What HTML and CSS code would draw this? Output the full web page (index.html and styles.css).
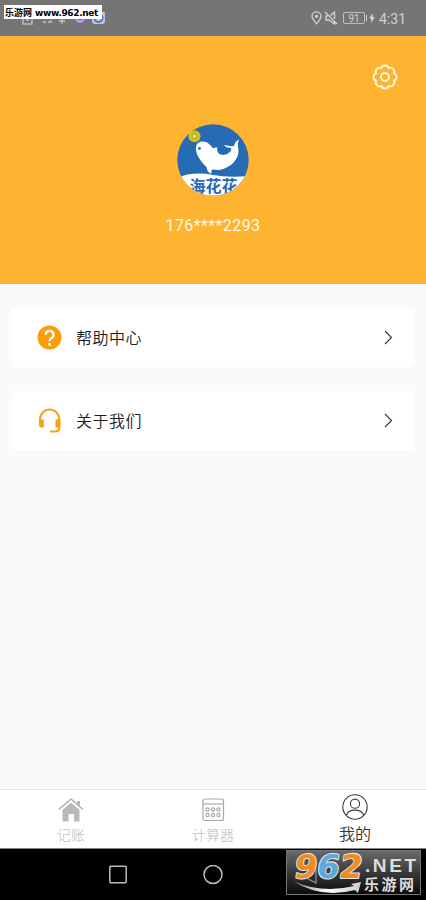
FILE: index.html
```html
<!DOCTYPE html>
<html lang="zh-CN">
<head>
<meta charset="utf-8">
<title>我的</title>
<link rel="stylesheet" href="styles.css">
</head>
<body>
<div class="screen">
  <header class="status">
    <svg class="notices" width="86" height="14" viewBox="0 0 86 14" fill="none" stroke="#c4c4c4" stroke-width="1.3">
      <rect x="3" y="1" width="9" height="11"/><path d="M6 8h3M23 10h3M28 10h2M31 8v3M42 1v11M39 9h6"/>
      <circle cx="60" cy="4" r="7" fill="#9263dc" stroke="none"/><path d="M56 8l4 2 4-2" stroke="#d8c5f4"/>
      <rect x="72" y="-1" width="13" height="13" rx="3" fill="#bcc5e0" stroke="none"/><circle cx="78.500" cy="6" r="4" stroke="#5d72b5" stroke-width="2"/>
    </svg>
    <span class="site-tag"><span class="site-cn">乐游网</span><span class="site-url">www.962.net</span></span>
    <div class="signals">
      <svg width="11" height="14" viewBox="0 0 11 14" fill="none" stroke="#d2d2d2" stroke-width="1.3"><path d="M5.500 12.800C3 10 1 7.800 1 5.300a4.500 4.500 0 0 1 9 0c0 2.500-2 4.700-4.500 7.500Z"/><circle cx="5.500" cy="5.300" r="1" fill="#d2d2d2"/></svg>
      <svg class="mute" width="14" height="14" viewBox="0 0 14 14" fill="none" stroke="#d2d2d2" stroke-width="1.400"><path d="M1 1l12 12M6.500 4.500L10.500 1v7M3.500 5H2v4h3l5.500 4v-2.500"/></svg>
      <span class="battery">91</span><i class="cap"></i>
      <svg class="bolt" width="6" height="10" viewBox="0 0 6 10" fill="#e0e0e0"><path d="M3.800 0L.3 5.500h2.200L2 10l3.700-5.700H3.300Z"/></svg>
      <span class="time">4:31</span>
    </div>
  </header>
  <section class="profile">
    <svg class="gear" width="28" height="28" viewBox="-14 -14 28 28" fill="none" stroke="#fff7df" stroke-width="1.900" stroke-linejoin="round">
      <path d="M-3.700-8.900A3.900 3.900 0 0 1 3.700-8.900A3.900 3.900 0 0 1 8.900-3.700A3.900 3.900 0 0 1 8.900 3.700A3.900 3.900 0 0 1 3.700 8.900A3.900 3.900 0 0 1-3.700 8.900A3.900 3.900 0 0 1-8.900 3.700A3.900 3.900 0 0 1-8.900-3.700A3.900 3.900 0 0 1-3.700-8.900Z"/><circle r="4"/>
    </svg>
    <svg class="avatar" width="72" height="72" viewBox="0 0 72 72">
      <defs><clipPath id="disc"><circle cx="36" cy="36" r="35.700"/></clipPath></defs>
      <g clip-path="url(#disc)">
        <rect width="72" height="72" fill="#286bb5"/>
        <path d="M0 54Q16 47 36 51Q52 54 72 52V72H0Z" fill="#fff"/>
        <path d="M19 23C20 17 27 16 32 20C36 23 37 27 41 29.500Q48 33 53 28Q55 26 54 24Q49 24 47 21Q53 22.500 57 22Q58 17 62 15.500Q60 20 61.500 26C62 35 54 44 42 46L35 45.500L34 50Q30 48 29.500 43C23 37 18 29 19 23Z" fill="#fff"/>
        <path d="M34 25Q37 23 40.500 23.500Q39 26 42 30L36 29Z" fill="#fff"/>
        <circle cx="22.500" cy="24.500" r="1.400" fill="#286bb5"/>
        <text x="36.500" y="67.500" text-anchor="middle" textLength="48" class="logo-name">海花花</text>
      </g>
      <circle cx="17.500" cy="12.300" r="6" fill="#d8bd18"/><rect x="15.800" y="10.600" width="3.400" height="3.400" fill="#fff0a0" stroke="#8e9e26" stroke-width=".7"/>
    </svg>
    <div class="phone">176****2293</div>
  </section>
  <main class="options">
    <div class="card">
      <svg class="lead" width="26" height="26" viewBox="0 0 26 26"><circle cx="12.500" cy="12.500" r="12" fill="#fb9d0c"/><path d="M8.700 9.800a3.900 3.900 0 1 1 5.700 3.400c-1.300.7-1.900 1.400-1.900 3" fill="none" stroke="#fff" stroke-width="2.200"/><circle cx="12.500" cy="19.500" r="1.400" fill="#fff"/></svg>
      <span>帮助中心</span>
      <svg class="arrow" width="9" height="15" viewBox="0 0 9 15"><path d="M1 1l6.500 6.500L1 14"/></svg>
    </div>
    <div class="card">
      <svg class="lead" width="26" height="26" viewBox="0 0 26 26"><path d="M3.200 15v-4a9.500 9.500 0 0 1 19 0V19.500q0 4-4 4H13" fill="none" stroke="#f7a11a" stroke-width="2.200"/><path d="M2.100 11.500H6.800v8H4.300q-2.200 0-2.200-2ZM23.300 11.500H18.500v8h4.800Z" fill="#f7a11a"/></svg>
      <span>关于我们</span>
      <svg class="arrow" width="9" height="15" viewBox="0 0 9 15"><path d="M1 1l6.500 6.500L1 14"/></svg>
    </div>
  </main>
  <nav class="tabs">
    <div class="tab">
      <svg width="26" height="26" viewBox="0 0 26 26"><path d="M4.500 13L13 5.500l8.500 7.500v11.500H16V17h-5.500v7.500h-6Z" fill="#b9b9b9"/><path d="M1 12.500L13 2l12 10.500" fill="none" stroke="#b2b2b2" stroke-width="1.600"/><path d="M19 4h3v5l-3-2.500Z" fill="#b5b5b5"/></svg>
      <span>记账</span>
    </div>
    <div class="tab">
      <svg width="26" height="26" viewBox="0 0 26 26" fill="none" stroke="#a8a8a8" stroke-width="1.200"><rect x="3" y="2" width="20.500" height="21.500" rx="2"/><path d="M3 7h20"/><circle cx="7.500" cy="12.500" r="1.600"/><circle cx="13" cy="12.500" r="1.600"/><circle cx="18.500" cy="12.500" r="1.600"/><circle cx="7.500" cy="18" r="1.600"/><circle cx="13" cy="18" r="1.600"/><circle cx="18.500" cy="18" r="1.600"/></svg>
      <span>计算器</span>
    </div>
    <div class="tab active">
      <svg width="26" height="26" viewBox="0 0 26 26" fill="none" stroke="#3c3c3c" stroke-width="1.100"><circle cx="13" cy="13" r="12.200"/><circle cx="13" cy="9.700" r="4.600"/><path d="M4.300 21.500c2-7.200 15.400-7.200 17.400 0"/></svg>
      <span>我的</span>
    </div>
  </nav>
  <footer class="system">
    <div class="key"><svg width="20" height="20" viewBox="0 0 20 20"><rect x="1.800" y="1.300" width="16.400" height="16.400" rx="1"/></svg></div>
    <div class="key"><svg width="20" height="20" viewBox="0 0 20 20"><circle cx="10" cy="9.500" r="9"/></svg></div>
    <svg class="brand" width="136" height="46" viewBox="0 0 136 46">
      <defs><linearGradient id="plate" x2="0" y2="1"><stop stop-color="#6b6b6b"/><stop offset="1" stop-color="#090909"/></linearGradient><linearGradient id="swoosh"><stop stop-color="#777"/><stop offset=".5" stop-color="#fff"/><stop offset="1" stop-color="#ccc"/></linearGradient></defs>
      <rect x=".5" y=".5" width="134" height="44" fill="url(#plate)" stroke="#777"/>
      <text transform="translate(7 28) skewX(-9)" class="digits"><tspan fill="#f18b20">9</tspan><tspan fill="#5ea9dc">6</tspan><tspan fill="#f18b20">2</tspan></text>
      <path d="M30 20v13L18 27Z" fill="none" stroke="#a8a29c" stroke-opacity=".7" stroke-width="1.500"/>
      <text x="79" y="22" textLength="51" class="net">.NET</text>
      <text x="78" y="40" textLength="50" class="brand-cn">乐游网</text>
      <path d="M7 31Q36 44 68 36L65 34L75 32L72 43L69 40Q35 49 7 31Z" fill="url(#swoosh)"/>
    </svg>
  </footer>
</div>
</body>
</html>
```
FILE: styles.css
```css
* { box-sizing: border-box; }
body { margin: 0; background: #fafafa; font-family: Roboto, "Noto Sans CJK SC", sans-serif; }
svg { display: block; flex: none; }
.screen { width: 426px; height: 900px; display: flex; flex-direction: column; overflow: hidden; }
.status { position: relative; height: 36px; flex: none; background: #757575; border-bottom: 1px solid #987644; display: flex; justify-content: flex-end; }
.notices { position: absolute; left: 20px; top: 12px; }
.site-tag { position: absolute; left: 4px; top: 5px; width: 98px; height: 14px; background: #fff; color: #000; display: flex; align-items: center; gap: 3px; padding-left: 1px; white-space: nowrap; line-height: 14px; }
.site-cn { font: 700 9px/14px "Noto Sans CJK SC", sans-serif; padding-top: 1px; }
.site-url { font: 700 9px/14px "DejaVu Sans", sans-serif; letter-spacing: -.35px; padding-top: 1px; }
.signals { display: flex; align-items: center; height: 36px; padding-right: 20px; color: #d2d2d2; }
.signals > svg:first-child { margin-right: -1px; }
.mute { margin-left: 3px; }
.battery { width: 22px; height: 12px; margin-left: 5px; border: 1px solid #bdbdbd; border-radius: 2px; font-size: 10px; line-height: 11px; text-align: center; }
.cap { width: 1px; height: 6px; margin-left: 1px; background: #ccc; }
.bolt { margin: 0 4px 0 2px; }
.time { width: 27px; font-size: 14px; line-height: 20px; white-space: nowrap; padding-top: 1px; }
.profile { height: 248px; flex: none; background: #ffb431; display: flex; flex-direction: column; align-items: center; }
.gear { align-self: flex-end; margin: 27px 27px 0 0; }
.avatar { margin-top: 33px; }
.logo-name { font: 700 16px "Noto Sans CJK SC", sans-serif; fill: #286bb5; }
.phone { margin-top: 20px; font-size: 16px; line-height: 20px; letter-spacing: .4px; color: #fff8e8; }
.options { flex: 1; padding: 24px 11px 0 12px; display: flex; flex-direction: column; gap: 24px; }
.card { height: 59px; flex: none; display: flex; align-items: center; background: #fff; border-radius: 4px; padding: 0 22px 0 25px; font-size: 16px; line-height: 24px; letter-spacing: .5px; color: #1c1c1c; font-family: "Noto Sans CJK SC", sans-serif; font-weight: 350; }
.card span { padding-bottom: 1px; }
.lead { margin-right: 13px; }
.arrow { margin-left: auto; fill: none; stroke: #333; stroke-width: 1.1; }
.tabs { height: 59px; flex: none; border-top: 1px solid #e6e6e6; background: #fff; display: grid; grid-template-columns: repeat(3, 1fr); }
.tab { display: flex; flex-direction: column; align-items: center; padding-top: 7px; font-size: 14px; line-height: 20px; color: #bcbcbc; font-weight: 300; }
.tab span { margin-top: 2px; }
.tab.active { padding-top: 4px; font-size: 16px; line-height: 22px; color: #333; font-weight: 350; }
.tab.active span { margin-top: 4px; }
.system { position: relative; height: 52px; flex: none; background: #000; border-top: 1px solid #888; display: flex; padding-left: 71px; }
.key { width: 94.700px; display: flex; justify-content: center; align-items: center; }
.key svg { fill: none; stroke: #bcbcbc; stroke-width: 1.5; }
.brand { position: absolute; left: 286px; top: 1px; }
.digits { font: 700 32.500px "DejaVu Sans", sans-serif; stroke: #e9e9e9; stroke-width: 2px; paint-order: stroke; stroke-linejoin: round; }
.net { font: 700 19px "Liberation Sans", sans-serif; fill: #ddd; }
.brand-cn { font: 700 15px "Noto Sans CJK SC", sans-serif; fill: #ddd; }
```
